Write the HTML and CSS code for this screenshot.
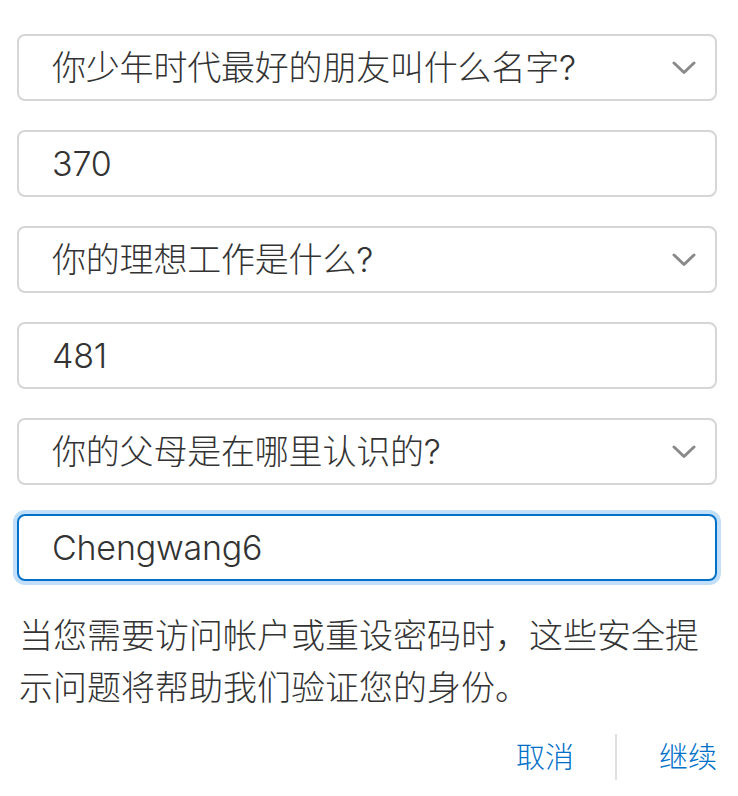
FILE: index.html
```html
<!DOCTYPE html>
<html lang="zh-CN">
<head>
<meta charset="utf-8">
<title>安全提示问题</title>
<link rel="stylesheet" href="styles.css">
</head>
<body>
<div class="page">
  <div class="field select">
    <span class="value">你少年时代最好的朋友叫什么名字?</span>
    <svg class="chevron" width="24" height="14" viewBox="0 0 24 14"><path d="M2 2 L12 11.5 L22 2" fill="none" stroke="#8a8a8a" stroke-width="3" stroke-linecap="round" stroke-linejoin="round"/></svg>
  </div>
  <div class="field"><span class="value">370</span></div>
  <div class="field select">
    <span class="value">你的理想工作是什么?</span>
    <svg class="chevron" width="24" height="14" viewBox="0 0 24 14"><path d="M2 2 L12 11.5 L22 2" fill="none" stroke="#8a8a8a" stroke-width="3" stroke-linecap="round" stroke-linejoin="round"/></svg>
  </div>
  <div class="field"><span class="value">481</span></div>
  <div class="field select">
    <span class="value">你的父母是在哪里认识的?</span>
    <svg class="chevron" width="24" height="14" viewBox="0 0 24 14"><path d="M2 2 L12 11.5 L22 2" fill="none" stroke="#8a8a8a" stroke-width="3" stroke-linecap="round" stroke-linejoin="round"/></svg>
  </div>
  <div class="field focused"><span class="value">Chengwang6</span></div>
  <p class="help">当您需要访问帐户或重设密码时，这些安全提示问题将帮助我们验证您的身份。</p>
  <div class="actions">
    <span class="btn cancel">取消</span>
    <span class="divider"></span>
    <span class="btn next">继续</span>
  </div>
</div>
</body>
</html>
```

FILE: styles.css
```css
html, body {
  margin: 0;
  padding: 0;
  background: #ffffff;
}
body {
  font-family: "Inter", "Noto Sans CJK SC", sans-serif;
  color: #333333;
}
.page {
  width: 700px;
  margin-left: 17px;
  padding-top: 34px;
  display: flex;
  flex-direction: column;
  gap: 29px;
}
.field {
  box-sizing: border-box;
  height: 67px;
  border: 2px solid #d6d6d6;
  border-radius: 8px;
  display: flex;
  align-items: center;
  justify-content: space-between;
  padding: 0 19px 0 33px;
  font-size: 34px;
  font-weight: 300;
  color: #333333;
}
.value {
  line-height: 1;
  white-space: nowrap;
  letter-spacing: -0.2px;
}
.chevron {
  display: block;
  flex: none;
}
.focused {
  border-color: #0070c9;
  box-shadow: 0 0 0 4px #c2dff9;
}
.help {
  margin: 0;
  padding-left: 2px;
  font-size: 34px;
  font-weight: 300;
  line-height: 52px;
  color: #333333;
}
.actions {
  margin-top: -10px;
  display: flex;
  justify-content: flex-end;
  align-items: center;
  height: 48px;
}
.btn {
  font-size: 29px;
  font-weight: 300;
  color: #0070c9;
  line-height: 1;
}
.divider {
  width: 2px;
  height: 46px;
  background: #e0e0e0;
  margin: 0 42px 0 41px;
}
```
